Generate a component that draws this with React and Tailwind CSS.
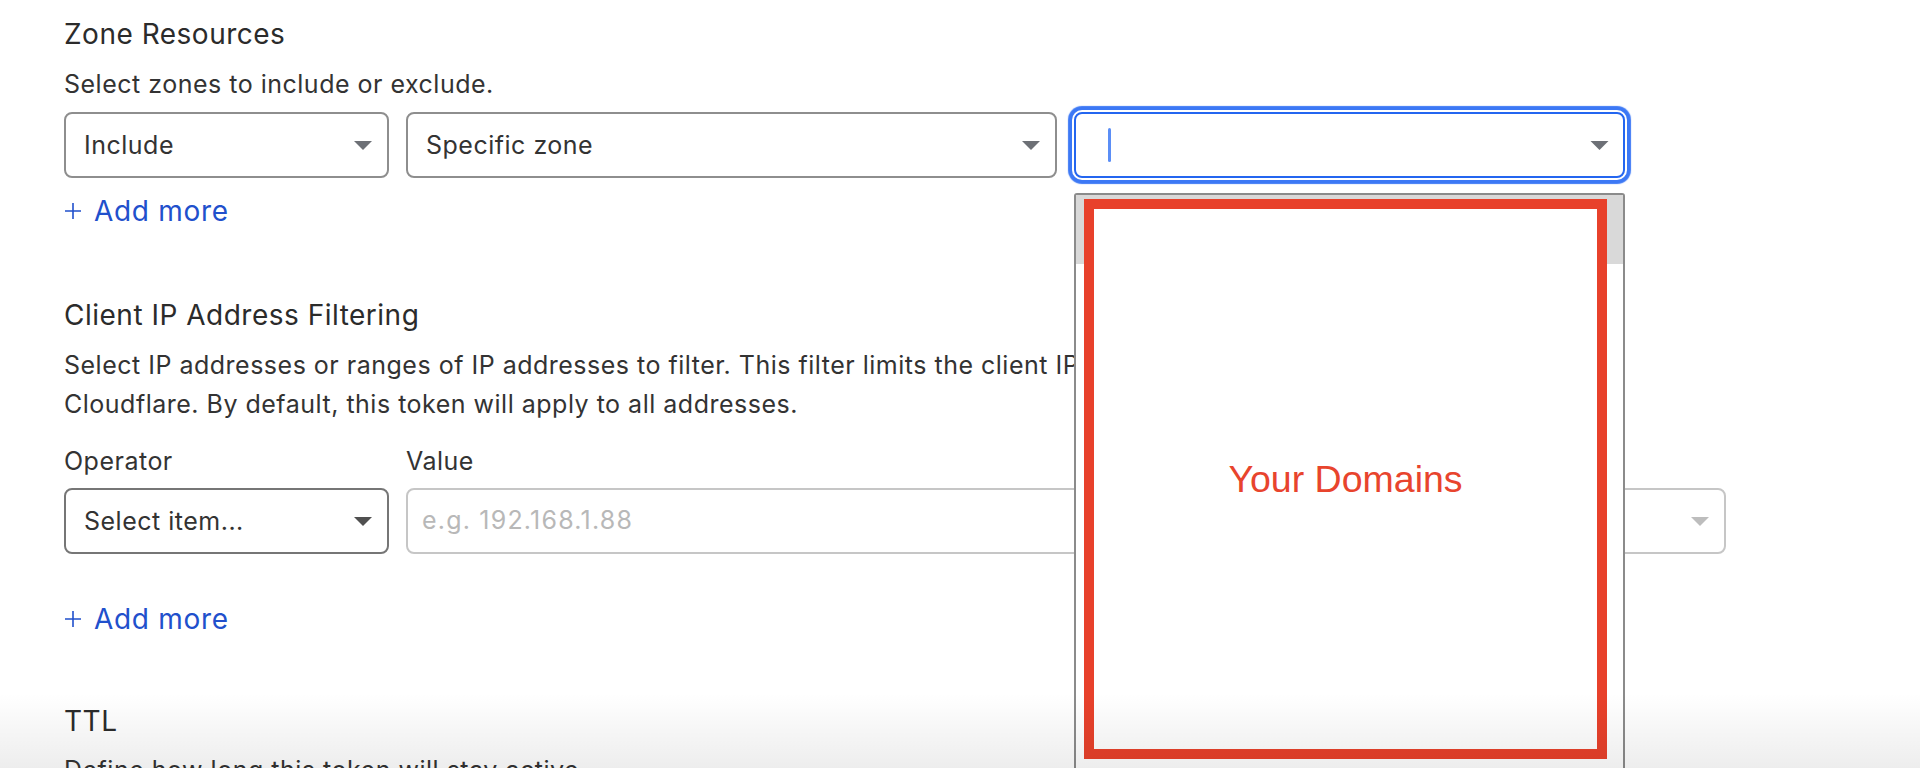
import React from "react";

const Caret = ({ className }) => (
  <svg viewBox="0 0 18 9" className={className} aria-hidden="true">
    <path d="M0 0h18L9 9z" fill="currentColor" />
  </svg>
);

const AddMore = ({ className }) => (
  <button
    type="button"
    className={`flex items-center gap-[12px] text-[#2150cc] ${className}`}
  >
    <svg viewBox="0 0 18 18" className="h-[18px] w-[18px]" aria-hidden="true">
      <path
        d="M9 1v16M1 9h16"
        stroke="currentColor"
        strokeWidth="1.6"
        fill="none"
      />
    </svg>
    <span className="text-[28px] leading-[34px] tracking-[0.7px]">Add more</span>
  </button>
);

const SelectBox = ({ width, children, border, caret }) => (
  <div
    className={`flex h-[66px] items-center justify-between rounded-lg border-2 bg-white pl-[18px] pr-[15px] text-[25px] text-[#333] ${width} ${border}`}
  >
    <span className="leading-[38px]">{children}</span>
    {caret}
  </div>
);

const App = () => {
  return (
    <div className="relative h-[768px] w-full overflow-hidden bg-white font-['Inter',sans-serif] tracking-[0.5px] text-[#2b2b2b]">
      <div className="px-[64px]">
        {/* Zone Resources */}
        <h2 className="pt-[17px] text-[28px] leading-[34px]">Zone Resources</h2>
        <p className="mt-[14px] text-[25px] leading-[38px] text-[#333]">
          Select zones to include or exclude.
        </p>
        <div className="mt-[9px] flex gap-[17px]">
          <SelectBox
            width="w-[325px]"
            border="border-[#8e8e8e]"
            caret={<Caret className="h-[9px] w-[18px] text-[#6d7076]" />}
          >
            Include
          </SelectBox>
          <SelectBox
            width="w-[651px]"
            border="border-[#8e8e8e]"
            caret={<Caret className="h-[9px] w-[18px] text-[#6d7076]" />}
          >
            Specific zone
          </SelectBox>
          <div className="relative flex h-[66px] w-[551px] items-center justify-between rounded-lg border-2 border-[#2466f0] bg-white pl-[32px] pr-[14px] shadow-[0_0_0_2px_#fff,0_0_1px_6px_#3c78f5]">
            <span className="h-[34px] w-[3px] rounded-full bg-[#5b8ef6]" />
            <Caret className="h-[9px] w-[19px] text-[#6d7076]" />

            {/* open dropdown */}
            <div className="absolute left-[-2px] top-[79px] z-10 h-[620px] w-[551px] overflow-hidden rounded-t-[3px] border-2 border-[#8b8b8b] bg-white">
              <div className="h-[69px] bg-[#d9d9d9]" />
              <div className="absolute left-[8px] top-[4px] flex h-[560px] w-[523px] items-center justify-center border-[10px] border-[#e8412b] bg-white">
                <span className="font-['Liberation_Sans',Arial,sans-serif] text-[37.5px] tracking-normal text-[#e8442d]">
                  Your Domains
                </span>
              </div>
            </div>
          </div>
        </div>
        <AddMore className="mt-[16px]" />

        {/* Client IP Address Filtering */}
        <h2 className="mt-[70px] text-[28px] leading-[34px]">
          Client IP Address Filtering
        </h2>
        <p className="mt-[14px] text-[25px] leading-[39px] text-[#333]">
          Select IP addresses or ranges of IP addresses to filter. This filter limits the client IP addresses that can use this token to
          <br />
          Cloudflare. By default, this token will apply to all addresses.
        </p>
        <div className="mt-[18px] flex gap-[17px]">
          <div className="w-[325px]">
            <label className="block text-[25px] leading-[38px] text-[#333]">Operator</label>
            <div className="mt-[8px]">
              <SelectBox
                width="w-[325px]"
                border="border-[#767676]"
                caret={<Caret className="h-[11px] w-[18px] text-[#505050]" />}
              >
                Select item...
              </SelectBox>
            </div>
          </div>
          <div className="w-[1320px]">
            <label className="block text-[25px] leading-[38px] text-[#333]">Value</label>
            <div className="mt-[8px] flex h-[66px] items-center justify-between rounded-lg border-2 border-[#c6c6c6] pl-[14px] pr-[15px] text-[25px]">
              <span className="tracking-[1.2px] text-[#b8b8b8]">e.g. 192.168.1.88</span>
              <Caret className="h-[9px] w-[18px] text-[#bdbdbd]" />
            </div>
          </div>
        </div>
        <AddMore className="mt-[48px]" />

        {/* TTL */}
        <h2 className="mt-[68px] text-[28px] leading-[34px]">TTL</h2>
        <p className="mt-[13px] text-[25px] leading-[38px] text-[#333]">
          Define how long this token will stay active.
        </p>
      </div>

      {/* bottom fade */}
      <div className="pointer-events-none absolute bottom-0 left-0 right-0 z-20 h-[75px] bg-[linear-gradient(to_bottom,rgba(0,0,0,0),rgba(0,0,0,0.07))]" />
    </div>
  );
};

export default App;
